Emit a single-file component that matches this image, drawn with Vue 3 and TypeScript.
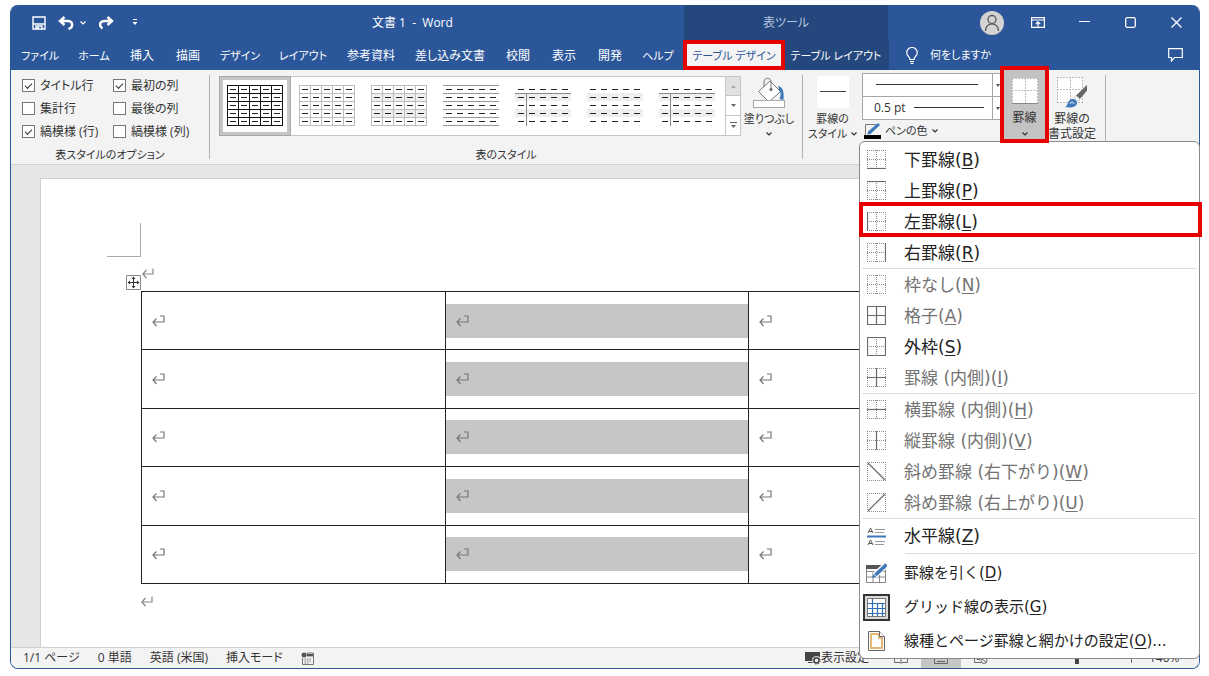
<script setup lang="ts">
import { ref } from 'vue'

interface Tab { label: string; size: string; kind?: string; kana?: boolean }
const tabs: Tab[] = [
  { label: 'ファイル', size: 'w58', kana: true },
  { label: 'ホーム', size: 'w50', kana: true },
  { label: '挿入', size: 'w46' },
  { label: '描画', size: 'w46' },
  { label: 'デザイン', size: 'w58', kana: true },
  { label: 'レイアウト', size: 'w68', kana: true },
  { label: '参考資料', size: 'w68' },
  { label: '差し込み文書', size: 'w90' },
  { label: '校閲', size: 'w46' },
  { label: '表示', size: 'w46' },
  { label: '開発', size: 'w46' },
  { label: 'ヘルプ', size: 'w50', kana: true },
  { label: 'テーブル デザイン', size: 'w102', kind: 'active', kana: true },
  { label: 'テーブル レイアウト', size: 'w102', kind: 'context', kana: true },
]

const title = '文書 1  -  Word'

const options = ref([
  { label: 'タイトル行', checked: true },
  { label: '最初の列', checked: true },
  { label: '集計行', checked: false },
  { label: '最後の列', checked: false },
  { label: '縞模様 (行)', checked: true },
  { label: '縞模様 (列)', checked: false },
])

interface Thumb { name: string; grid?: string; rows?: boolean; bands?: boolean; head?: boolean }
const thumbs: Thumb[] = [
  { name: '表 (格子)', grid: '#111' },
  { name: '表 (格子) 淡色', grid: '#bdbdbd' },
  { name: '標準の表 1', grid: '#bdbdbd', bands: true },
  { name: '標準の表 2', rows: true },
  { name: '標準の表 3', bands: true, head: true },
  { name: '標準の表 4', bands: true },
  { name: '標準の表 5', bands: true, head: true },
]
const steps = [0, 1, 2, 3, 4]
const edges = [0, 1, 2, 3, 4, 5]

interface Item { label: string; key: string; tail?: string; icon: string; off?: boolean; marked?: boolean; tall?: boolean; checked?: boolean }
const groups: { inset?: boolean; items: Item[] }[] = [
  {
    items: [
      { label: '下罫線', key: 'B', icon: 'b' },
      { label: '上罫線', key: 'P', icon: 't' },
      { label: '左罫線', key: 'L', icon: 'l', marked: true },
      { label: '右罫線', key: 'R', icon: 'r' },
    ],
  },
  {
    items: [
      { label: '枠なし', key: 'N', icon: '', off: true },
      { label: '格子', key: 'A', icon: 'tblrhv', off: true },
      { label: '外枠', key: 'S', icon: 'tblr' },
      { label: '罫線 (内側)', key: 'I', icon: 'hv', off: true },
    ],
  },
  {
    items: [
      { label: '横罫線 (内側)', key: 'H', icon: 'h', off: true },
      { label: '縦罫線 (内側)', key: 'V', icon: 'v', off: true },
      { label: '斜め罫線 (右下がり)', key: 'W', icon: 'x', off: true },
      { label: '斜め罫線 (右上がり)', key: 'U', icon: 'y', off: true },
    ],
  },
  { items: [{ label: '水平線', key: 'Z', icon: 'rule', tall: true }] },
  {
    inset: true,
    items: [
      { label: '罫線を引く', key: 'D', icon: 'draw', tall: true },
      { label: 'グリッド線の表示', key: 'G', icon: 'grid', tall: true, checked: true },
      { label: '線種とページ罫線と網かけの設定', key: 'O', tail: '...', icon: 'page', tall: true },
    ],
  },
]

const lines: Record<string, string> = {
  t: 'M0 .5H19', b: 'M0 18.5H19', l: 'M.5 0V19', r: 'M18.5 0V19',
  h: 'M0 9.5H19', v: 'M9.5 0V19', x: 'M1 1L18 18', y: 'M1 18L18 1',
}
const isBorder = (icon: string) => !['rule', 'draw', 'grid', 'page'].includes(icon)
const solid = (icon: string) => icon.split('').map((c) => lines[c]).join('')
const dotted = (icon: string) =>
  Object.keys(lines)
    .filter((c) => !'xy'.includes(c) && !icon.includes(c))
    .filter((c) => !('hv'.includes(c) && /[xy]/.test(icon)))
    .map((c) => lines[c])
    .join('')
</script>

<template>
  <div class="window">
    <header>
      <div class="titlebar">
        <div class="title-left">
          <div class="quick">
            <button aria-label="上書き保存">
              <svg width="14" height="14" viewBox="0 0 14 14" fill="none" stroke="#fff" stroke-width="1.4"><path d="M1 1h12v12H1zM1 8h12M4 13V10h6v3" /><path d="M5 11h2v2H5z" fill="#fff" stroke="none" /></svg>
            </button>
            <button aria-label="元に戻す">
              <svg width="16" height="14" viewBox="0 0 16 14" fill="none" stroke="#fff" stroke-width="2.4"><path d="M6.500 1L2 5l4.500 4M2 5h7.500c6 0 6 6.500 1 8" /></svg>
            </button>
            <button class="chev" aria-label="元に戻す一覧">
              <svg width="6" height="4" viewBox="0 0 6 4" fill="none" stroke="#fff" stroke-width="1.2"><path d="M.5 .5L3 3 5.500 .5" /></svg>
            </button>
            <button aria-label="やり直し">
              <svg width="16" height="14" viewBox="0 0 16 14" fill="none" stroke="#fff" stroke-width="2.4"><path d="M9.500 1L14 5l-4.500 4M14 5H7C1 5 1 10 4.500 12.500" /></svg>
            </button>
            <button class="more" aria-label="クイック アクセス ツール バーのカスタマイズ">
              <svg width="6" height="7" viewBox="0 0 6 7"><path d="M1 .5h4" stroke="#fff" /><path d="M.5 3h5L3 6z" fill="#fff" /></svg>
            </button>
          </div>
          <h1>{{ title }}</h1>
        </div>
        <div class="context-title">表ツール</div>
        <div class="controls">
          <button aria-label="アカウント" class="avatar">
            <svg width="24" height="24" viewBox="0 0 24 24"><circle cx="12" cy="12" r="12" fill="#d5d3d3" /><g fill="none" stroke="#595959" stroke-width="1.3"><circle cx="12" cy="8.500" r="4" /><path d="M5.500 20c0-9.500 13-9.500 13 0" /></g></svg>
          </button>
          <button aria-label="リボンの表示オプション">
            <svg width="14" height="11" viewBox="0 0 14 11" fill="none" stroke="#fff" stroke-width="1.2"><path d="M.6 .6h12.800v9.800H.6zM.6 3h12.800M7 10V5M4.800 7L7 4.800 9.200 7" /></svg>
          </button>
          <button aria-label="最小化">
            <svg width="11" height="11" viewBox="0 0 11 11" stroke="#fff"><path d="M0 4.500h11" /></svg>
          </button>
          <button aria-label="最大化">
            <svg width="11" height="11" viewBox="0 0 11 11" fill="none" stroke="#fff" stroke-width="1.3"><rect x=".7" y=".7" width="9.600" height="9.600" rx="1.500" /></svg>
          </button>
          <button aria-label="閉じる">
            <svg width="11" height="11" viewBox="0 0 11 11" stroke="#fff" stroke-width="1.3"><path d="M.5 .5l10 10M10.500 .5l-10 10" /></svg>
          </button>
        </div>
      </div>
      <nav class="tabs">
        <button v-for="t in tabs" :key="t.label" :class="['tab', t.size, t.kind, { kana: t.kana }]">{{ t.label }}</button>
        <button class="tell">
          <svg width="12" height="17" viewBox="0 0 12 17" fill="none" stroke="#fff" stroke-width="1.2"><path d="M4 12.500c0-3-3.300-3.500-3.300-7a5.300 5 0 0 1 10.600 0c0 3.500-3.300 4-3.300 7zM4 14.500h4M4.500 16.300h3" /></svg>
          <span class="kana">何をしますか</span>
        </button>
        <button class="comment" aria-label="コメント">
          <svg width="15" height="14" viewBox="0 0 15 14" fill="none" stroke="#fff" stroke-width="1.2"><path d="M.7 .7h13.600v8.800H6.500L3.500 13V9.500H.7z" /></svg>
        </button>
      </nav>
    </header>

    <section class="ribbon">
      <div class="group opts">
        <div class="checks">
          <label v-for="o in options" :key="o.label"><input v-model="o.checked" type="checkbox" />{{ o.label }}</label>
        </div>
        <div class="caption kana">表スタイルのオプション</div>
      </div>
      <div class="sep"></div>
      <div class="group styles">
        <div class="style-row">
          <div class="gallery">
            <button v-for="(t, i) in thumbs" :key="t.name" :class="['thumb', { chosen: i === 0 }]" :aria-label="t.name">
              <svg width="56" height="42" viewBox="0 0 56 42" fill="none">
                <template v-if="t.bands">
                  <rect x="0" y="8" width="56" height="8" fill="#efefef" />
                  <rect x="0" y="24" width="56" height="8" fill="#efefef" />
                </template>
                <template v-if="t.grid">
                  <path v-for="e in edges" :key="'h' + e" :d="`M0 ${e * 8 + 0.5}H56`" :stroke="t.grid" />
                  <path v-for="e in edges" :key="'v' + e" :d="`M${e * 11 + 0.5} 0V41`" :stroke="t.grid" />
                </template>
                <template v-if="t.rows">
                  <path v-for="e in edges" :key="'r' + e" :d="`M0 ${e * 8 + 0.5}H56`" stroke="#999" />
                </template>
                <path v-if="t.head" d="M0 8.500H56M11.500 8V41" stroke="#8a8a8a" />
                <template v-for="r in steps" :key="'d' + r">
                  <path v-for="c in steps" :key="c" :d="`M${c * 11 + 3} ${r * 8 + 4.5}h6`" stroke="#222" />
                </template>
              </svg>
            </button>
            <div class="scroll">
              <button class="dim" aria-label="前の行"><svg width="5" height="3" viewBox="0 0 5 3"><path d="M0 3h5L2.500 0z" fill="#aaa" /></svg></button>
              <button aria-label="次の行"><svg width="5" height="3" viewBox="0 0 5 3"><path d="M0 0h5L2.500 3z" fill="#666" /></svg></button>
              <button aria-label="その他"><svg width="7" height="7" viewBox="0 0 7 7"><path d="M0 .5h7" stroke="#666" /><path d="M1 3h5L3.500 6z" fill="#666" /></svg></button>
            </div>
          </div>
          <button class="big fill kana">
            <svg width="34" height="32" viewBox="0 0 34 32"><path d="M18 5l10.500 10.500L18 25h-2L6.500 15.500z" fill="#fff" stroke="#777" /><path d="M12 11V6c0-5 7-5 7 0v8" fill="none" stroke="#777" /><circle cx="19" cy="13.500" r="1.500" fill="#666" /><path d="M26 10c6 1 6 8 5.500 14l-4-1c1-3 2-5 0-8z" fill="#3d78b8" /><rect x="1.500" y="24.500" width="31" height="7" fill="#fff" stroke="#aaa" /></svg>
            <span>塗りつぶし</span>
            <svg width="6" height="4" viewBox="0 0 6 4" fill="none" stroke="#333" stroke-width="1.2"><path d="M.5 .5L3 3 5.500 .5" /></svg>
          </button>
        </div>
        <div class="caption kana">表のスタイル</div>
      </div>
      <div class="sep"></div>
      <div class="group borders">
        <button class="big line-style kana">
          <svg width="32" height="32" viewBox="0 0 32 32"><path d="M0 0h32v32H0z" fill="#fff" /><path d="M3 15.500h26" stroke="#444" /></svg>
          <span>罫線の</span>
          <span>スタイル <svg width="6" height="4" viewBox="0 0 6 4" fill="none" stroke="#333" stroke-width="1.2"><path d="M.5 .5L3 3 5.500 .5" /></svg></span>
        </button>
        <div class="pens">
          <div class="combo">
            <select aria-label="ペンのスタイル"><option></option></select>
            <span class="stroke"></span>
            <span class="drop"></span>
          </div>
          <div class="combo">
            <select aria-label="ペンの太さ"><option>0.5 pt</option></select>
            <span class="stroke short"></span>
            <span class="drop"></span>
          </div>
          <button class="pen-color kana">
            <svg width="17" height="16" viewBox="0 0 17 16"><path d="M1.500 12V1.500H12" fill="none" stroke="#777" /><path d="M14 0l2 2L6.500 11l-3 .5L4 8.500z" fill="#3d78b8" /><path d="M0 12h17v4H0z" fill="#000" /></svg>
            ペンの色
            <svg width="6" height="4" viewBox="0 0 6 4" fill="none" stroke="#333" stroke-width="1.2"><path d="M.5 .5L3 3 5.500 .5" /></svg>
          </button>
        </div>
        <button class="big pressed">
          <svg width="26" height="28" viewBox="0 0 26 28"><path d="M0 1h26v26H0z" fill="#fff" /><path d="M.5 1V27M25.500 1V27M13.500 1V27M0 1.500h26M0 13.500h26" stroke="#bbb" stroke-dasharray="2 1" /><path d="M0 26.500h26" stroke="#888" /></svg>
          <span>罫線</span>
          <svg width="6" height="4" viewBox="0 0 6 4" fill="none" stroke="#333" stroke-width="1.2"><path d="M.5 .5L3 3 5.500 .5" /></svg>
        </button>
        <button class="big painter">
          <svg width="32" height="32" viewBox="0 0 32 32"><path d="M1 1h26v26H1z" fill="#fff" /><path d="M1.500 1V27M26.500 1V27M14.500 1V27M1 1.500h26M1 13.500h26M1 26.500h26" stroke="#bbb" stroke-dasharray="2 1" /><path d="M31 9v5.500l-7 8.500-4-3.500z" fill="#666" /><path d="M20 19.500l4 3.500-2 2.500-4-4z" fill="#fff" stroke="#888" stroke-width=".6" /><path d="M9 31c3-1 2-5 5.500-7.500 3-1.500 7 1 6.500 4-1 4-7 4.500-12 3.500z" fill="#3d78b8" /><path d="M14 28c1-2.500 3-2.500 4 0" fill="none" stroke="#fff" /></svg>
          <span>罫線の</span>
          <span>書式設定</span>
        </button>
      </div>
      <div class="sep"></div>
    </section>

    <main>
      <article class="page">
        <div class="corner"></div>
        <div class="before">
          <button class="move" aria-label="表の移動ハンドル">
            <svg width="15" height="15" viewBox="0 0 15 15"><path d="M.5 .5h14v14H.5z" fill="#fff" stroke="#888" /><path d="M7.500 3v9M3 7.500h9" stroke="#333" /><path d="M7.500 1.500l2 2.500h-4zM7.500 13.500l2-2.500h-4zM1.500 7.500l2.500-2v4zM13.500 7.500l-2.500-2v4z" fill="#333" /></svg>
          </button>
          <svg class="ret" width="12" height="11" viewBox="0 0 12 11" fill="none" stroke="#888" stroke-width="1.2"><path d="M11 .5V6H1M4.500 2L.8 6l3.700 4" /></svg>
        </div>
        <table>
          <tbody>
            <tr v-for="r in 5" :key="r">
              <td v-for="c in 3" :key="c">
                <div :class="['cell', { selected: c === 2 }]">
                  <svg width="13" height="12" viewBox="0 0 13 12" fill="none" stroke="#777" stroke-width="1.2"><path d="M8 1h4v6H1M4.500 3.500L1 7l3.500 4" /></svg>
                </div>
              </td>
            </tr>
          </tbody>
        </table>
        <svg class="after" width="12" height="11" viewBox="0 0 12 11" fill="none" stroke="#888" stroke-width="1.2"><path d="M11 .5V6H1M4.500 2L.8 6l3.700 4" /></svg>
      </article>
    </main>

    <footer>
      <span>1/1 ページ</span>
      <span>0 単語</span>
      <span>英語 (米国)</span>
      <span>挿入モード</span>
      <svg width="13" height="13" viewBox="0 0 13 13"><circle cx="3" cy="3" r="2.500" fill="#555" /><path d="M6 1h6.500v3H6zM1.500 6v6.500h11V4" fill="none" stroke="#777" /><path d="M6 2h6v2H6z" fill="#555" /><path d="M3.500 7h7M3.500 9h7M3.500 11h5" stroke="#777" stroke-dasharray="1.500 1" /></svg>
      <div class="views">
        <button class="display">
          <svg width="16" height="14" viewBox="0 0 16 14"><path d="M0 1h15v9H0zM3 11h5v1H3z" fill="#444" /><circle cx="11.500" cy="9.500" r="4.500" fill="#f3f3f3" /><circle cx="11.500" cy="9.500" r="2.500" fill="none" stroke="#444" stroke-width="1.5" /><circle cx="11.500" cy="9.500" r="3.600" fill="none" stroke="#444" stroke-dasharray="1.500 1.300" /></svg>
          表示設定
        </button>
        <button class="view" aria-label="閲覧モード"><svg width="14" height="12" viewBox="0 0 14 12" fill="none" stroke="#666"><path d="M.5 1.500H6l1 1 1-1h5.500v9H8l-1 1-1-1H.5zM7 2v9" /></svg></button>
        <button class="view current" aria-label="印刷レイアウト"><svg width="14" height="12" viewBox="0 0 14 12" fill="none" stroke="#666"><path d="M.5 .5h13v11H.5zM3 3.500h8M3 6.500h8M3 9.500h8" /></svg></button>
        <button class="view" aria-label="Web レイアウト"><svg width="14" height="12" viewBox="0 0 14 12" fill="none" stroke="#666"><path d="M12.500 5V.5H.5v10H7M3 4.500h6M3 7.500h3" /><circle cx="10" cy="8.500" r="3" /><path d="M8 7l4 3" /></svg></button>
        <input class="zoom" type="range" min="10" max="190" value="115" aria-label="ズーム" />
        <button class="plus" aria-label="拡大"><svg width="9" height="9" viewBox="0 0 9 9" stroke="#666"><path d="M0 4.500h9M4.500 0v9" /></svg></button>
        <span class="percent">140%</span>
      </div>
    </footer>

    <div class="menu" role="menu">
      <div v-for="(g, gi) in groups" :key="gi" :class="['menu-group', { inset: g.inset }]">
        <button v-for="it in g.items" :key="it.key" role="menuitem" :disabled="it.off" :class="['item', { tall: it.tall, marked: it.marked }]">
          <span :class="['icon', { checked: it.checked }]">
            <svg v-if="isBorder(it.icon)" width="19" height="19" viewBox="0 0 19 19" fill="none">
              <path :d="dotted(it.icon)" stroke="#8c8c8c" stroke-dasharray="1 1" />
              <path :d="solid(it.icon)" stroke="#6a6a6a" stroke-width="1.2" />
            </svg>
            <svg v-else-if="it.icon === 'rule'" width="19" height="19" viewBox="0 0 19 19" fill="none" stroke="#555">
              <path d="M1 6l2.500-5L6 6M2 4.500h3M1 18l2.500-5L6 18M2 16.500h3" />
              <path d="M8 2.500h10M8 5.500h9M8 14.500h10M8 17.500h9" stroke="#999" />
              <path d="M0 9.500h19" stroke="#3d78b8" stroke-width="2" />
            </svg>
            <svg v-else-if="it.icon === 'draw'" width="21" height="21" viewBox="0 0 21 21" fill="none">
              <path d="M.5 2.500h19v17H.5zM.5 8.500h19M.5 14h19M7 8v11M13.500 8v11" stroke="#888" />
              <path d="M0 2h16l-3 4H0z" fill="#555" />
              <path d="M20.500 1.500l-12 11" stroke="#fff" stroke-width="6" />
              <path d="M20.500 1.500l-11 10.500" stroke="#3d78b8" stroke-width="3.5" />
              <path d="M6 15l1.500-4 2.800 2.800z" fill="#3d78b8" />
            </svg>
            <svg v-else-if="it.icon === 'grid'" width="19" height="19" viewBox="0 0 19 19" fill="none">
              <path d="M.5 .5h18v18H.5z" fill="#fff" stroke="#777" />
              <path d="M1 5.500h17M1 10.500h17M1 15.500h17M5.500 1v17M10.500 5v13M15.500 5v13" stroke="#2f6fb5" stroke-width="1.2" />
            </svg>
            <svg v-else width="17" height="20" viewBox="0 0 17 20" fill="none">
              <path d="M.5 .5h11l5 5v14H.5z" fill="#fff" stroke="#666" />
              <path d="M3 3h8v4h3v10H3z" stroke="#e3b778" stroke-width="2" />
              <path d="M11.500 .5v5h5" fill="#fff" stroke="#666" />
            </svg>
          </span>
          <span>{{ it.label }}(<u>{{ it.key }}</u>){{ it.tail }}</span>
        </button>
      </div>
    </div>
  </div>
</template>

<style>
body {
  background: #fff;
}
</style>

<style scoped>
.window {
  position: relative;
  display: flex;
  flex-direction: column;
  box-sizing: border-box;
  min-height: calc(100vh - 12px);
  margin: 5px 9px 7px 10px;
  border: 1px solid #2b579a;
  border-top: 0;
  border-radius: 8px;
  background: #e6e6e6;
  color: #333;
  font: 12px/16px "Open Sans", "Noto Sans CJK JP", sans-serif;
  font-feature-settings: "palt";
}
button {
  padding: 0;
  border: 0;
  background: none;
  color: inherit;
  font: inherit;
  font-feature-settings: inherit;
  white-space: nowrap;
}
svg {
  display: block;
  flex: none;
}
.kana {
  font-size: 11px;
}
header {
  border-radius: 7px 7px 0 0;
  background: #2b579a;
  color: #fff;
}
.titlebar {
  display: flex;
  height: 35px;
}
.title-left {
  display: flex;
  align-items: center;
  flex: 0 0 673px;
}
.quick {
  display: flex;
  align-items: center;
  gap: 12px;
  width: 361px;
  padding-left: 21px;
  box-sizing: border-box;
}
.quick .chev {
  margin: 0 0 0 -6px;
}
.quick .more {
  margin-left: 6px;
}
h1 {
  margin: 0;
  font-size: 12px;
  font-weight: 400;
  white-space: pre;
}
.context-title {
  flex: 0 0 204px;
  line-height: 35px;
  text-align: center;
  background: #24477d;
  color: #b5c5df;
}
.controls {
  display: flex;
  align-items: center;
  margin-left: auto;
}
.controls button {
  display: flex;
  justify-content: center;
  width: 46px;
}
.tabs {
  display: flex;
  height: 30px;
}
.tab {
  flex: none;
  line-height: 32px;
}
.w46 { width: 46px; }
.w50 { width: 50px; }
.w58 { width: 58px; }
.w68 { width: 68px; }
.w90 { width: 90px; }
.w102 { width: 102px; }
.tab.active {
  position: relative;
  z-index: 2;
  box-sizing: border-box;
  border: 4px solid #e60000;
  line-height: 24px;
  background: #f3f3f3;
  color: #2b579a;
}
.tab.context {
  padding-right: 2px;
  box-sizing: content-box;
  background: #24477d;
}
.tell {
  display: flex;
  align-items: center;
  gap: 12px;
  padding-left: 17px;
}
.comment {
  margin-left: auto;
  padding-right: 16px;
}
.ribbon {
  display: flex;
  height: 94px;
  border-bottom: 1px solid #d2d2d2;
  background: #f3f3f3;
}
.sep {
  width: 1px;
  margin: 5px 0;
  background: #b0b0b0;
}
.group {
  display: flex;
  flex-direction: column;
  flex: none;
}
.caption {
  height: 17px;
  margin-top: auto;
  text-align: center;
}
.opts {
  width: 198px;
}
.checks {
  display: grid;
  grid-template-columns: 91px 96px;
  grid-auto-rows: 23px;
  padding: 4px 0 0 11px;
}
.checks label {
  display: flex;
  align-items: center;
  gap: 5px;
  white-space: nowrap;
}
.checks input {
  display: flex;
  align-items: center;
  justify-content: center;
  width: 13px;
  height: 13px;
  margin: 0;
  border: 1px solid #777;
  background: #fff;
  appearance: none;
}
.checks input:checked::after {
  content: "";
  width: 6px;
  height: 3px;
  margin-bottom: 2px;
  border: solid #333;
  border-width: 0 0 1px 1px;
  transform: rotate(-45deg);
}
.styles {
  width: 592px;
}
.style-row {
  display: flex;
  padding: 6px 0 0 9px;
}
.gallery {
  display: flex;
  box-sizing: border-box;
  width: 522px;
  height: 60px;
  border: 1px solid #c6c6c6;
  background: #fff;
}
.thumb {
  display: flex;
  align-items: center;
  justify-content: center;
  flex: none;
  width: 72px;
}
.thumb.chosen {
  box-sizing: border-box;
  margin: -1px 0 -1px -1px;
  border: 4px solid #c6c6c6;
  outline: 1px solid #a8a8a8;
  outline-offset: -1px;
}
.scroll {
  display: grid;
  grid-template-rows: repeat(3, 1fr);
  width: 14px;
  margin: -1px -1px -1px auto;
  border: 1px solid #c6c6c6;
}
.scroll button {
  display: flex;
  align-items: center;
  justify-content: center;
  border-bottom: 1px solid #c6c6c6;
}
.scroll button:last-child {
  border-bottom: 0;
}
.scroll .dim {
  background: #e1e1e1;
}
.big {
  display: flex;
  flex-direction: column;
  align-items: center;
}
.big span {
  display: flex;
  align-items: center;
  gap: 4px;
  height: 15px;
}
.fill {
  width: 56px;
}
.fill span {
  margin: 3px 0 6px;
}
.borders {
  flex-direction: row;
  align-items: flex-start;
  width: 302px;
}
.line-style {
  width: 59px;
  padding-top: 6px;
}
.line-style span:first-of-type,
.painter span:first-of-type {
  margin-top: 3px;
}
.pens {
  width: 142px;
  padding-top: 3px;
}
.combo {
  position: relative;
  height: 24px;
  margin-bottom: -1px;
}
.combo select {
  box-sizing: border-box;
  width: 100%;
  height: 24px;
  padding: 0 11px;
  border: 1px solid #a6a6a6;
  border-radius: 0;
  background: #fff;
  color: #333;
  font: inherit;
  appearance: none;
}
.stroke {
  position: absolute;
  top: 11px;
  right: 26px;
  left: 14px;
  height: 1px;
  background: #333;
}
.stroke.short {
  right: 20px;
  left: 52px;
}
.drop {
  position: absolute;
  top: 1px;
  right: 1px;
  bottom: 1px;
  width: 10px;
  border-left: 1px solid #a6a6a6;
}
.drop::after {
  content: "";
  position: absolute;
  top: 10px;
  left: 3px;
  border: 2px solid transparent;
  border-top: 3px solid #555;
}
.pen-color {
  display: flex;
  align-items: center;
  gap: 4px;
  height: 24px;
  padding-left: 2px;
}
.pressed {
  position: relative;
  z-index: 3;
  width: 41px;
  height: 69px;
  padding-top: 7px;
  background: #c3c3c3;
  outline: 4px solid #e60000;
}
.pressed span {
  margin: 5px 0 7px;
}
.painter {
  width: 52px;
  padding-top: 6px;
  margin-left: 1px;
}
main {
  display: flex;
  flex: 1;
  padding: 13px 20px 0 29px;
  overflow: hidden;
}
.page {
  flex: 1;
  min-width: 0;
  border: 1px solid #cfcfcf;
  border-bottom: 0;
  background: #fff;
}
.corner {
  width: 33px;
  height: 33px;
  margin: 44px 0 0 66px;
  border: solid #aaa;
  border-width: 0 1px 1px 0;
}
.before {
  display: flex;
  align-items: flex-end;
  height: 34px;
  padding-left: 85px;
}
.before .move {
  margin-bottom: 1px;
}
.before .ret {
  margin: 0 0 12px 1px;
}
table {
  width: 912px;
  height: 293px;
  margin-left: 100px;
  border-collapse: collapse;
  table-layout: fixed;
}
td {
  padding: 0;
  border: 1px solid #222;
}
.cell {
  display: flex;
  align-items: center;
  height: 34px;
  padding-left: 10px;
}
.cell.selected {
  background: #c6c6c6;
}
.after {
  margin: 12px 0 0 100px;
}
footer {
  display: flex;
  align-items: center;
  gap: 18px;
  height: 20px;
  padding-left: 12px;
  border-top: 1px solid #d0d0d0;
  border-radius: 0 0 7px 7px;
  background: #f3f3f3;
}
.views {
  display: flex;
  align-items: center;
  width: 394px;
  height: 20px;
  margin-left: auto;
}
.display {
  display: flex;
  align-items: center;
  width: 76px;
}
.view {
  display: flex;
  align-items: center;
  justify-content: center;
  width: 40px;
  height: 20px;
}
.current {
  background: #c6c6c6;
}
.zoom {
  width: 110px;
  height: 12px;
  margin: 0 4px 0 12px;
  appearance: none;
  background: none;
}
.zoom::-webkit-slider-thumb {
  width: 4px;
  height: 12px;
  background: #444;
  appearance: none;
}
.plus {
  width: 10px;
}
.percent {
  margin-left: 12px;
}
.menu {
  position: absolute;
  z-index: 1;
  top: 136px;
  right: -1px;
  box-sizing: border-box;
  width: 341px;
  padding: 2px 0 0;
  border: 1px solid #8a8a8a;
  border-radius: 6px;
  background: #fff;
  color: #222;
  font: 17px/24px "DejaVu Sans", "Noto Sans CJK JP", sans-serif;
}
.menu-group + .menu-group::before {
  content: "";
  display: block;
  height: 1px;
  margin: 0 2px;
  background: #dcdcdc;
}
.menu-group.inset {
  font-size: 15px;
}
.menu-group.inset::before {
  margin: 0 2px 2px 45px;
}
.item {
  position: relative;
  display: flex;
  align-items: center;
  width: 100%;
  height: 31px;
}
.item:disabled {
  color: #737373;
}
.item.tall {
  height: 34px;
}
.item u {
  text-decoration-thickness: 1px;
  text-underline-offset: 2px;
}
.icon {
  display: flex;
  align-items: center;
  justify-content: center;
  flex: none;
  box-sizing: border-box;
  width: 27px;
  height: 27px;
  margin: 0 14px 0 3px;
}
.icon.checked {
  border: 2px solid #333;
  background: #d8d8d8;
}
.marked::after {
  content: "";
  position: absolute;
  inset: -4px -3px 0 -1px;
  border: 4px solid #e60000;
}
</style>
